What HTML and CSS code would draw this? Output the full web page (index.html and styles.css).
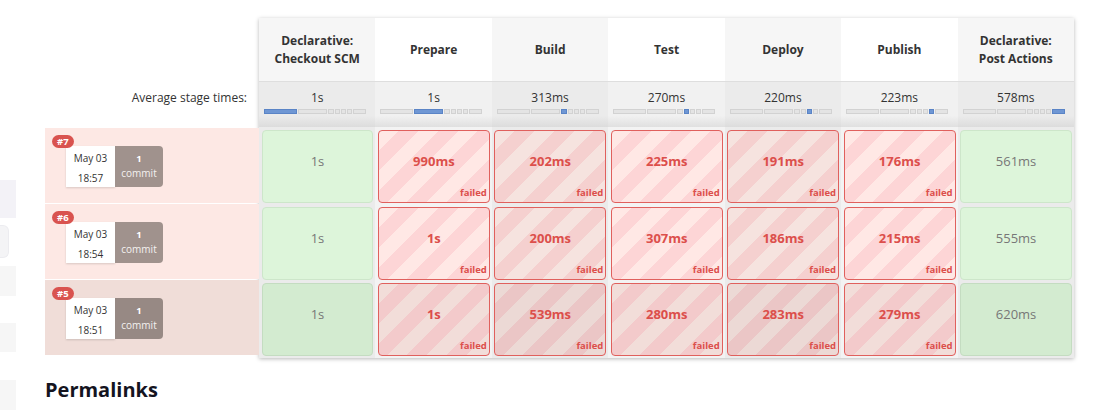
FILE: index.html
```html
<!DOCTYPE html>
<html>
<head>
<meta charset="utf-8">
<title>Stage View</title>
<link rel="stylesheet" href="styles.css">
</head>
<body>
<div class="page">
  <aside class="sidebar">
    <div class="sb sb1"></div>
    <div class="sb sb2"></div>
    <div class="sb sb3"></div>
    <div class="sb sb4"></div>
    <div class="sb sb5"></div>
  </aside>
  <main class="main">
    <section class="stageview">
      <div class="labels">
        <div class="label-head"></div>
        <div class="label-avg">Average stage times:</div>
        <div class="run">
          <span class="badge">#7</span>
          <div class="run-info">
            <div class="date"><span>May 03</span><span>18:57</span></div>
            <div class="commits"><b>1</b><span>commit</span></div>
          </div>
        </div>
        <div class="run">
          <span class="badge">#6</span>
          <div class="run-info">
            <div class="date"><span>May 03</span><span>18:54</span></div>
            <div class="commits"><b>1</b><span>commit</span></div>
          </div>
        </div>
        <div class="run run-last">
          <span class="badge">#5</span>
          <div class="run-info">
            <div class="date"><span>May 03</span><span>18:51</span></div>
            <div class="commits"><b>1</b><span>commit</span></div>
          </div>
        </div>
      </div>

      <div class="table">
        <div class="col odd">
          <div class="th">Declarative:<br>Checkout SCM</div>
          <div class="avg"><span>1s</span>
            <div class="track"><i class="on" style="width:33px"></i><i style="width:29px"></i><i style="width:6px"></i><i style="width:5px"></i><i style="width:5px"></i><i style="width:5px"></i><i style="width:13px"></i></div>
          </div>
          <div class="cells">
            <div class="cell ok"><span class="dur">1s</span></div>
            <div class="cell ok"><span class="dur">1s</span></div>
            <div class="cell ok last"><span class="dur">1s</span></div>
          </div>
        </div>

        <div class="col even">
          <div class="th">Prepare</div>
          <div class="avg"><span>1s</span>
            <div class="track"><i style="width:33px"></i><i class="on" style="width:29px"></i><i style="width:6px"></i><i style="width:5px"></i><i style="width:5px"></i><i style="width:5px"></i><i style="width:13px"></i></div>
          </div>
          <div class="cells">
            <div class="cell fail"><span class="dur">990ms</span><span class="status">failed</span></div>
            <div class="cell fail"><span class="dur">1s</span><span class="status">failed</span></div>
            <div class="cell fail last"><span class="dur">1s</span><span class="status">failed</span></div>
          </div>
        </div>

        <div class="col odd">
          <div class="th">Build</div>
          <div class="avg"><span>313ms</span>
            <div class="track"><i style="width:33px"></i><i style="width:29px"></i><i class="on" style="width:6px"></i><i style="width:5px"></i><i style="width:5px"></i><i style="width:5px"></i><i style="width:13px"></i></div>
          </div>
          <div class="cells">
            <div class="cell fail"><span class="dur">202ms</span><span class="status">failed</span></div>
            <div class="cell fail"><span class="dur">200ms</span><span class="status">failed</span></div>
            <div class="cell fail last"><span class="dur">539ms</span><span class="status">failed</span></div>
          </div>
        </div>

        <div class="col even">
          <div class="th">Test</div>
          <div class="avg"><span>270ms</span>
            <div class="track"><i style="width:33px"></i><i style="width:29px"></i><i style="width:6px"></i><i class="on" style="width:5px"></i><i style="width:5px"></i><i style="width:5px"></i><i style="width:13px"></i></div>
          </div>
          <div class="cells">
            <div class="cell fail"><span class="dur">225ms</span><span class="status">failed</span></div>
            <div class="cell fail"><span class="dur">307ms</span><span class="status">failed</span></div>
            <div class="cell fail last"><span class="dur">280ms</span><span class="status">failed</span></div>
          </div>
        </div>

        <div class="col odd">
          <div class="th">Deploy</div>
          <div class="avg"><span>220ms</span>
            <div class="track"><i style="width:33px"></i><i style="width:29px"></i><i style="width:6px"></i><i style="width:5px"></i><i class="on" style="width:5px"></i><i style="width:5px"></i><i style="width:13px"></i></div>
          </div>
          <div class="cells">
            <div class="cell fail"><span class="dur">191ms</span><span class="status">failed</span></div>
            <div class="cell fail"><span class="dur">186ms</span><span class="status">failed</span></div>
            <div class="cell fail last"><span class="dur">283ms</span><span class="status">failed</span></div>
          </div>
        </div>

        <div class="col even">
          <div class="th">Publish</div>
          <div class="avg"><span>223ms</span>
            <div class="track"><i style="width:33px"></i><i style="width:29px"></i><i style="width:6px"></i><i style="width:5px"></i><i style="width:5px"></i><i class="on" style="width:5px"></i><i style="width:13px"></i></div>
          </div>
          <div class="cells">
            <div class="cell fail"><span class="dur">176ms</span><span class="status">failed</span></div>
            <div class="cell fail"><span class="dur">215ms</span><span class="status">failed</span></div>
            <div class="cell fail last"><span class="dur">279ms</span><span class="status">failed</span></div>
          </div>
        </div>

        <div class="col odd">
          <div class="th">Declarative:<br>Post Actions</div>
          <div class="avg"><span>578ms</span>
            <div class="track"><i style="width:33px"></i><i style="width:29px"></i><i style="width:6px"></i><i style="width:5px"></i><i style="width:5px"></i><i style="width:5px"></i><i class="on" style="width:13px"></i></div>
          </div>
          <div class="cells">
            <div class="cell ok"><span class="dur">561ms</span></div>
            <div class="cell ok"><span class="dur">555ms</span></div>
            <div class="cell ok last"><span class="dur">620ms</span></div>
          </div>
        </div>
      </div>
    </section>
    <h2 class="permalinks">Permalinks</h2>
  </main>
</div>
</body>
</html>
```

FILE: styles.css
```css
* { box-sizing: border-box; }

html, body {
  margin: 0;
  background: #fff;
}

body {
  font-family: "Open Sans", "Noto Sans", "DejaVu Sans", sans-serif;
  color: #333;
  font-size: 12px;
}

.page {
  display: flex;
  align-items: flex-start;
}

/* cut-off sidebar on the far left */
.sidebar {
  width: 16px;
  flex: none;
  padding-top: 180px;
  display: flex;
  flex-direction: column;
}
.sb { width: 16px; background: #f6f6f6; }
.sb1 { height: 38px; background: #f3f2f7; }
.sb2 {
  height: 33px;
  width: 9px;
  margin-top: 7px;
  background: #f4f4f6;
  border: 1px solid #ececf0;
  border-left: none;
  border-radius: 0 6px 6px 0;
}
.sb3 { height: 30px; margin-top: 8px; }
.sb4 { height: 29px; margin-top: 27px; }
.sb5 { height: 30px; margin-top: 28px; }

.main {
  margin-left: 29px;
  padding-top: 18px;
}

.stageview {
  display: flex;
  align-items: flex-start;
}

/* left label column */
.labels {
  width: 214px;
  flex: none;
  display: flex;
  flex-direction: column;
}
.label-head { height: 64px; }
.label-avg {
  height: 45px;
  text-align: right;
  padding: 7px 12px 0 0;
  line-height: 18px;
  font-size: 12px;
  color: #333;
}
.run {
  position: relative;
  height: 75px;
  margin-top: 1px;
  background: #fde8e4;
  padding: 18px 0 0 21px;
}
.run-last { background: #f0ddd8; }

.badge {
  position: absolute;
  left: 7px;
  top: 7px;
  z-index: 2;
  background: #d9534f;
  color: #fff;
  font-weight: 700;
  font-size: 9.5px;
  line-height: 13px;
  height: 13px;
  padding: 0 5px;
  border-radius: 7px;
}

.run-info {
  display: flex;
  height: 41px;
}
.date {
  width: 49px;
  background: #fff;
  box-shadow: 0 1px 2px rgba(0,0,0,.15);
  display: flex;
  flex-direction: column;
  align-items: center;
  padding-top: 4px;
  font-size: 10px;
  line-height: 16px;
  gap: 4px;
  color: #333;
}
.commits {
  width: 48px;
  background: #a0928d;
  border-radius: 0 4px 4px 0;
  display: flex;
  flex-direction: column;
  align-items: center;
  padding-top: 5px;
  color: #f4f1f0;
  font-size: 10px;
  line-height: 15px;
}
.run-last .commits { background: #978984; }
.commits b { font-weight: 700; color: #fff; font-size: 9.5px; }

/* stage table */
.table {
  width: 815px;
  display: grid;
  grid-template-columns: repeat(7, 1fr);
  box-shadow: 0 1px 4px rgba(0,0,0,.28);
}

.col { display: flex; flex-direction: column; min-width: 0; }

.th {
  height: 64px;
  border-bottom: 1px solid #dedede;
  display: flex;
  align-items: center;
  justify-content: center;
  text-align: center;
  font-weight: 700;
  font-size: 12px;
  line-height: 18px;
  color: #333;
}
.col.odd .th { background: #f6f6f6; }
.col.even .th { background: #fff; }

.avg {
  height: 45px;
  display: flex;
  flex-direction: column;
  align-items: center;
  padding-top: 7px;
  line-height: 18px;
  font-size: 12px;
  color: #333;
}
.col.odd .avg { background: linear-gradient(to bottom, #ebebeb 0, #ebebeb 75%, #dcdcdc 100%); }
.col.even .avg { background: linear-gradient(to bottom, #f1f1f1 0, #f1f1f1 75%, #e0e0e0 100%); }

.track {
  display: flex;
  gap: 1px;
  margin: 2px 0 0 5px;
  align-self: flex-start;
  width: 102px;
}
.track i {
  display: block;
  height: 5px;
  background: #e4e4e4;
  border: 1px solid #d2d2d2;
  flex: none;
}
.track i.on {
  background: #6f97d4;
  border-color: #5a84c6;
}

.cells {
  display: flex;
  flex-direction: column;
  gap: 3.5px;
  padding: 3px 2px 2px 2.5px;
}
.col.odd .cells { background: #ebebeb; }
.col.even .cells { background: #f3f3f3; }

.cell {
  height: 73px;
  border-radius: 4px;
  display: flex;
  flex-direction: column;
  align-items: center;
  padding-top: 21px;
}
.dur {
  line-height: 18px;
  font-size: 13px;
}

.ok {
  background: #ddf5da;
  border: 1px solid #cde6ca;
  color: #777;
}
.ok.last {
  background: #d3ebd0;
  border-color: #c4dcc1;
}

.fail {
  --l: #ffe8e5;
  --d: #fdd5d6;
  background: repeating-linear-gradient(135deg, var(--l) 0, var(--l) 14px, var(--d) 14px, var(--d) 28px);
  border: 1px solid #e0605d;
  color: #dc4f4b;
}
.col.odd .fail { --l: #f6e3df; --d: #f5d0cf; }
.fail.last { --l: #f2ddd9; --d: #f3cacb; }
.col.odd .fail.last { --l: #ecd9d5; --d: #ebc6c6; }

.fail .dur { font-weight: 700; }
.status {
  margin-top: auto;
  align-self: flex-end;
  font-size: 9.5px;
  font-weight: 700;
  line-height: 12px;
  padding: 0 2px 3px 0;
}

.permalinks {
  margin: 17px 0 0 0;
  font-size: 20px;
  font-weight: 700;
  line-height: 30px;
  color: #14141f;
}
```
